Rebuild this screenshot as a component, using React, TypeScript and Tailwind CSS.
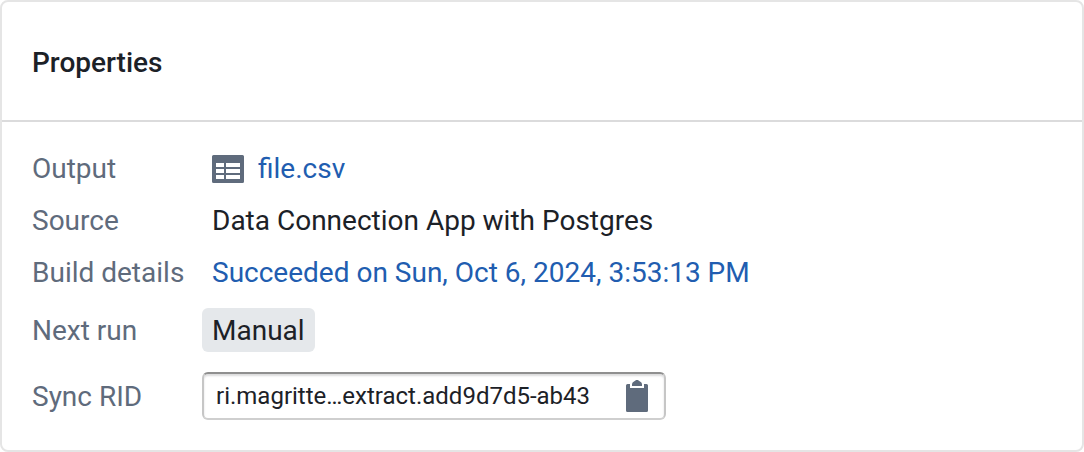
import React from "react";

function DatasetIcon() {
  return (
    <svg width="32" height="28" viewBox="0 0 32 28" aria-hidden="true" className="shrink-0">
      <path
        fill="#5f6b7c"
        fillRule="evenodd"
        d="M1.5 0h29A1.5 1.5 0 0 1 32 1.5v25a1.5 1.5 0 0 1-1.5 1.5h-29A1.5 1.5 0 0 1 0 26.500v-25A1.500 1.500 0 0 1 1.500 0ZM4 8v4h8V8ZM14 8v4h14V8ZM4 14v4h8v-4ZM14 14v4h14v-4ZM4 20v4h8v-4ZM14 20v4h14v-4Z"
      />
    </svg>
  );
}

function ClipboardIcon() {
  return (
    <svg width="22" height="32" viewBox="0 0 22 32" aria-hidden="true" className="block">
      <path
        fill="#5f6b7c"
        d="M1.500 4H4v4h14V4h2.500A1.500 1.500 0 0 1 22 5.500v25a1.500 1.500 0 0 1-1.500 1.500h-19A1.500 1.500 0 0 1 0 30.500v-25A1.500 1.500 0 0 1 1.500 4Z"
      />
      <path fill="#5f6b7c" d="M6 6V4.500C6 3 7 2.200 8 1.600C9 .6 9.800 0 11 0s2 .6 3 1.600c1 .6 2 1.400 2 2.900V6Z" />
    </svg>
  );
}

export default function App() {
  return (
    <section className="rounded-lg border-2 border-[#e5e5e5] bg-white font-['Roboto',sans-serif] text-[28px] leading-9 text-[#1c2127]">
      <header className="border-b-2 border-[#dbdbdc] px-[30px] pt-[43px] pb-[39px]">
        <h2 className="font-medium">Properties</h2>
      </header>
      <dl className="grid grid-cols-[180px_1fr] gap-y-4 px-[30px] pt-[29px] pb-[30px]">
        <dt className="text-[#5f6b7c]">Output</dt>
        <dd className="flex items-center gap-[14px]">
          <DatasetIcon />
          <a href="#file" className="text-[#215db0]">file.csv</a>
        </dd>
        <dt className="text-[#5f6b7c]">Source</dt>
        <dd>Data Connection App with Postgres</dd>
        <dt className="text-[#5f6b7c]">Build details</dt>
        <dd>
          <a href="#build" className="text-[#215db0]">Succeeded on Sun, Oct 6, 2024, 3:53:13 PM</a>
        </dd>
        <dt className="pt-[6px] text-[#5f6b7c]">Next run</dt>
        <dd className="-ml-[10px] flex pt-px">
          <span className="rounded-md bg-[#e5e8eb] px-[10px] pt-[5px] pb-[3px]">Manual</span>
        </dd>
        <dt className="self-center pt-[6px] text-[#5f6b7c]">
          <label htmlFor="rid">Sync RID</label>
        </dt>
        <dd className="mt-1 -ml-[10px] flex h-12 w-[464px] max-w-full items-center rounded-md border-2 border-t-[#8f8f8f] border-r-[#c6c6c6] border-b-[#cfcfcf] border-l-[#c6c6c6] pr-4 pl-3 shadow-[inset_0_2px_2px_rgba(17,20,24,0.15)]">
          <input
            id="rid"
            readOnly
            defaultValue="ri.magritte…extract.add9d7d5-ab43"
            className="min-w-0 flex-1 bg-transparent text-2xl outline-none"
          />
          <button type="button" aria-label="Copy RID">
            <ClipboardIcon />
          </button>
        </dd>
      </dl>
    </section>
  );
}
